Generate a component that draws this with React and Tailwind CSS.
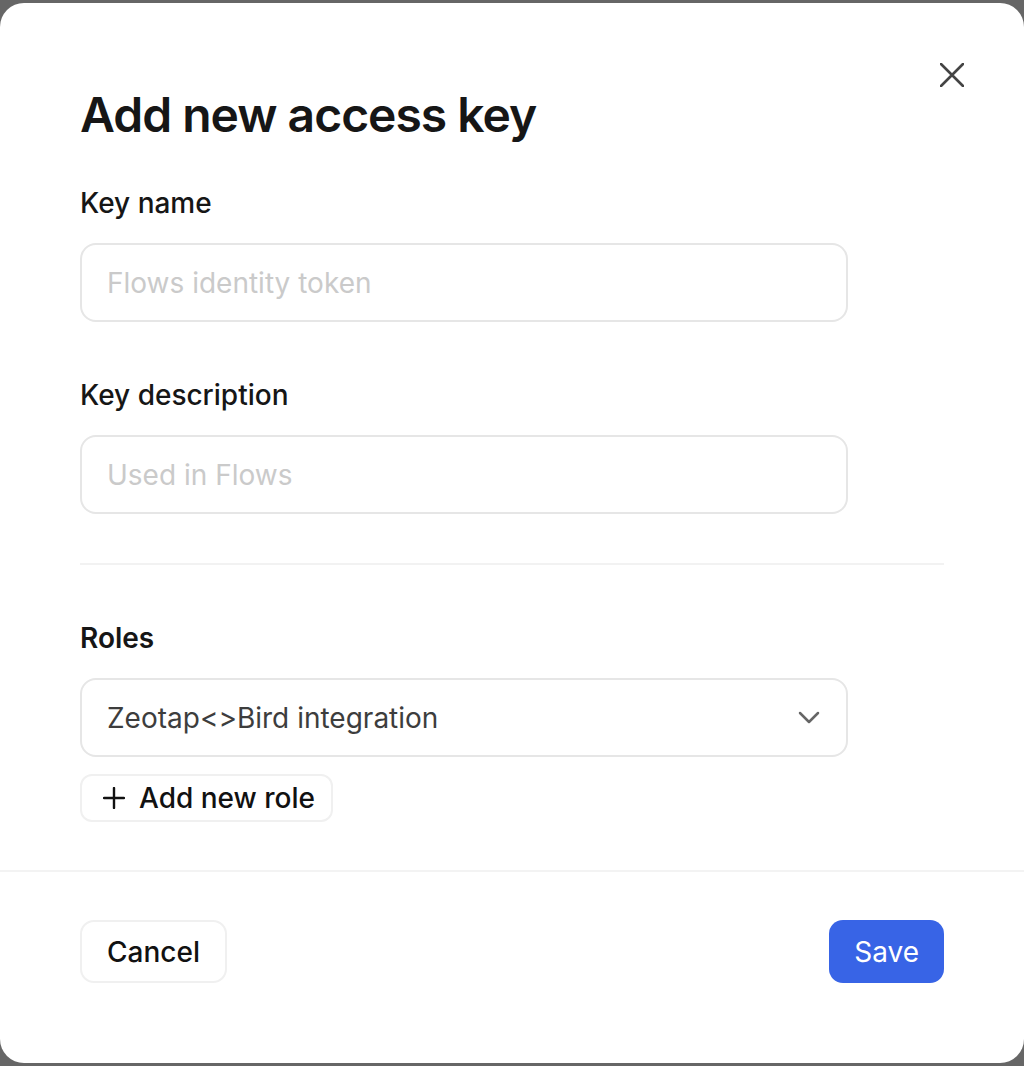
import React from "react";

function CloseIcon() {
  return (
    <svg width="24" height="24" viewBox="0 0 24 24" fill="none">
      <path d="M1 1L23 23M23 1L1 23" stroke="#444" strokeWidth="2.6" strokeLinecap="round" />
    </svg>
  );
}

function Chevron() {
  return (
    <svg width="22" height="13" viewBox="0 0 22 13" fill="none">
      <path d="M2 2L11 11L20 2" stroke="#666" strokeWidth="2.5" strokeLinecap="round" strokeLinejoin="round" />
    </svg>
  );
}

function Plus() {
  return (
    <svg width="22" height="22" viewBox="0 0 22 22" fill="none">
      <path d="M11 1V21M1 11H21" stroke="#111" strokeWidth="2.4" strokeLinecap="round" />
    </svg>
  );
}

export default function App() {
  return (
    <div
      className="min-h-[1066px] bg-[#666666] py-[3px]"
      style={{ fontFamily: "Inter, 'Noto Sans', sans-serif" }}
    >
      <div className="relative flex h-[1060px] flex-col rounded-[24px] bg-white">
        <button className="absolute right-[60px] top-[60px] flex h-[24px] w-[24px] items-center justify-center">
          <CloseIcon />
        </button>

        <div className="flex flex-col px-[80px] pt-[83px]">
          <h1 className="text-[48px] font-semibold leading-[58px] tracking-[-1px] text-[#161616]">
            Add new access key
          </h1>

          <label className="mt-[44px] text-[28px] font-medium leading-[30px] text-[#161616]">
            Key name
          </label>
          <div className="mt-[25px] flex h-[79px] w-[768px] items-center rounded-[16px] border-2 border-[#e6e6e6] px-[25px]">
            <span className="text-[28px] leading-[34px] text-[#cacaca]">Flows identity token</span>
          </div>

          <label className="mt-[58px] text-[28px] font-medium leading-[30px] text-[#161616]">
            Key description
          </label>
          <div className="mt-[25px] flex h-[79px] w-[768px] items-center rounded-[16px] border-2 border-[#e6e6e6] px-[25px]">
            <span className="text-[28px] leading-[34px] text-[#cacaca]">Used in Flows</span>
          </div>

          <div className="mt-[49px] h-[2px] w-full bg-[#f2f2f2]" />

          <label className="mt-[58px] text-[28px] font-semibold leading-[30px] text-[#161616]">
            Roles
          </label>
          <div className="mt-[25px] flex h-[79px] w-[768px] items-center justify-between rounded-[16px] border-2 border-[#e6e6e6] pl-[25px] pr-[26px]">
            <span className="text-[28px] leading-[34px] text-[#3d3d3d]">Zeotap&lt;&gt;Bird integration</span>
            <Chevron />
          </div>

          <div className="mt-[17px] flex">
            <button className="flex h-[48px] items-center gap-[14px] rounded-[12px] border-2 border-[#f0f0f0] pl-[21px] pr-[16px]">
              <Plus />
              <span className="text-[28px] font-medium leading-[34px] text-[#111]">Add new role</span>
            </button>
          </div>
        </div>

        <div className="mt-[48px] h-[2px] w-full bg-[#f3f3f3]" />

        <div className="flex items-center justify-between px-[80px] pt-[48px]">
          <button className="flex h-[63px] items-center rounded-[14px] border-2 border-[#f0f0f0] px-[25px] text-[28px] font-medium text-[#111]">
            Cancel
          </button>
          <button className="flex h-[63px] items-center rounded-[14px] bg-[#3864e6] px-[25px] text-[28px] font-normal text-white">
            Save
          </button>
        </div>
      </div>
    </div>
  );
}
